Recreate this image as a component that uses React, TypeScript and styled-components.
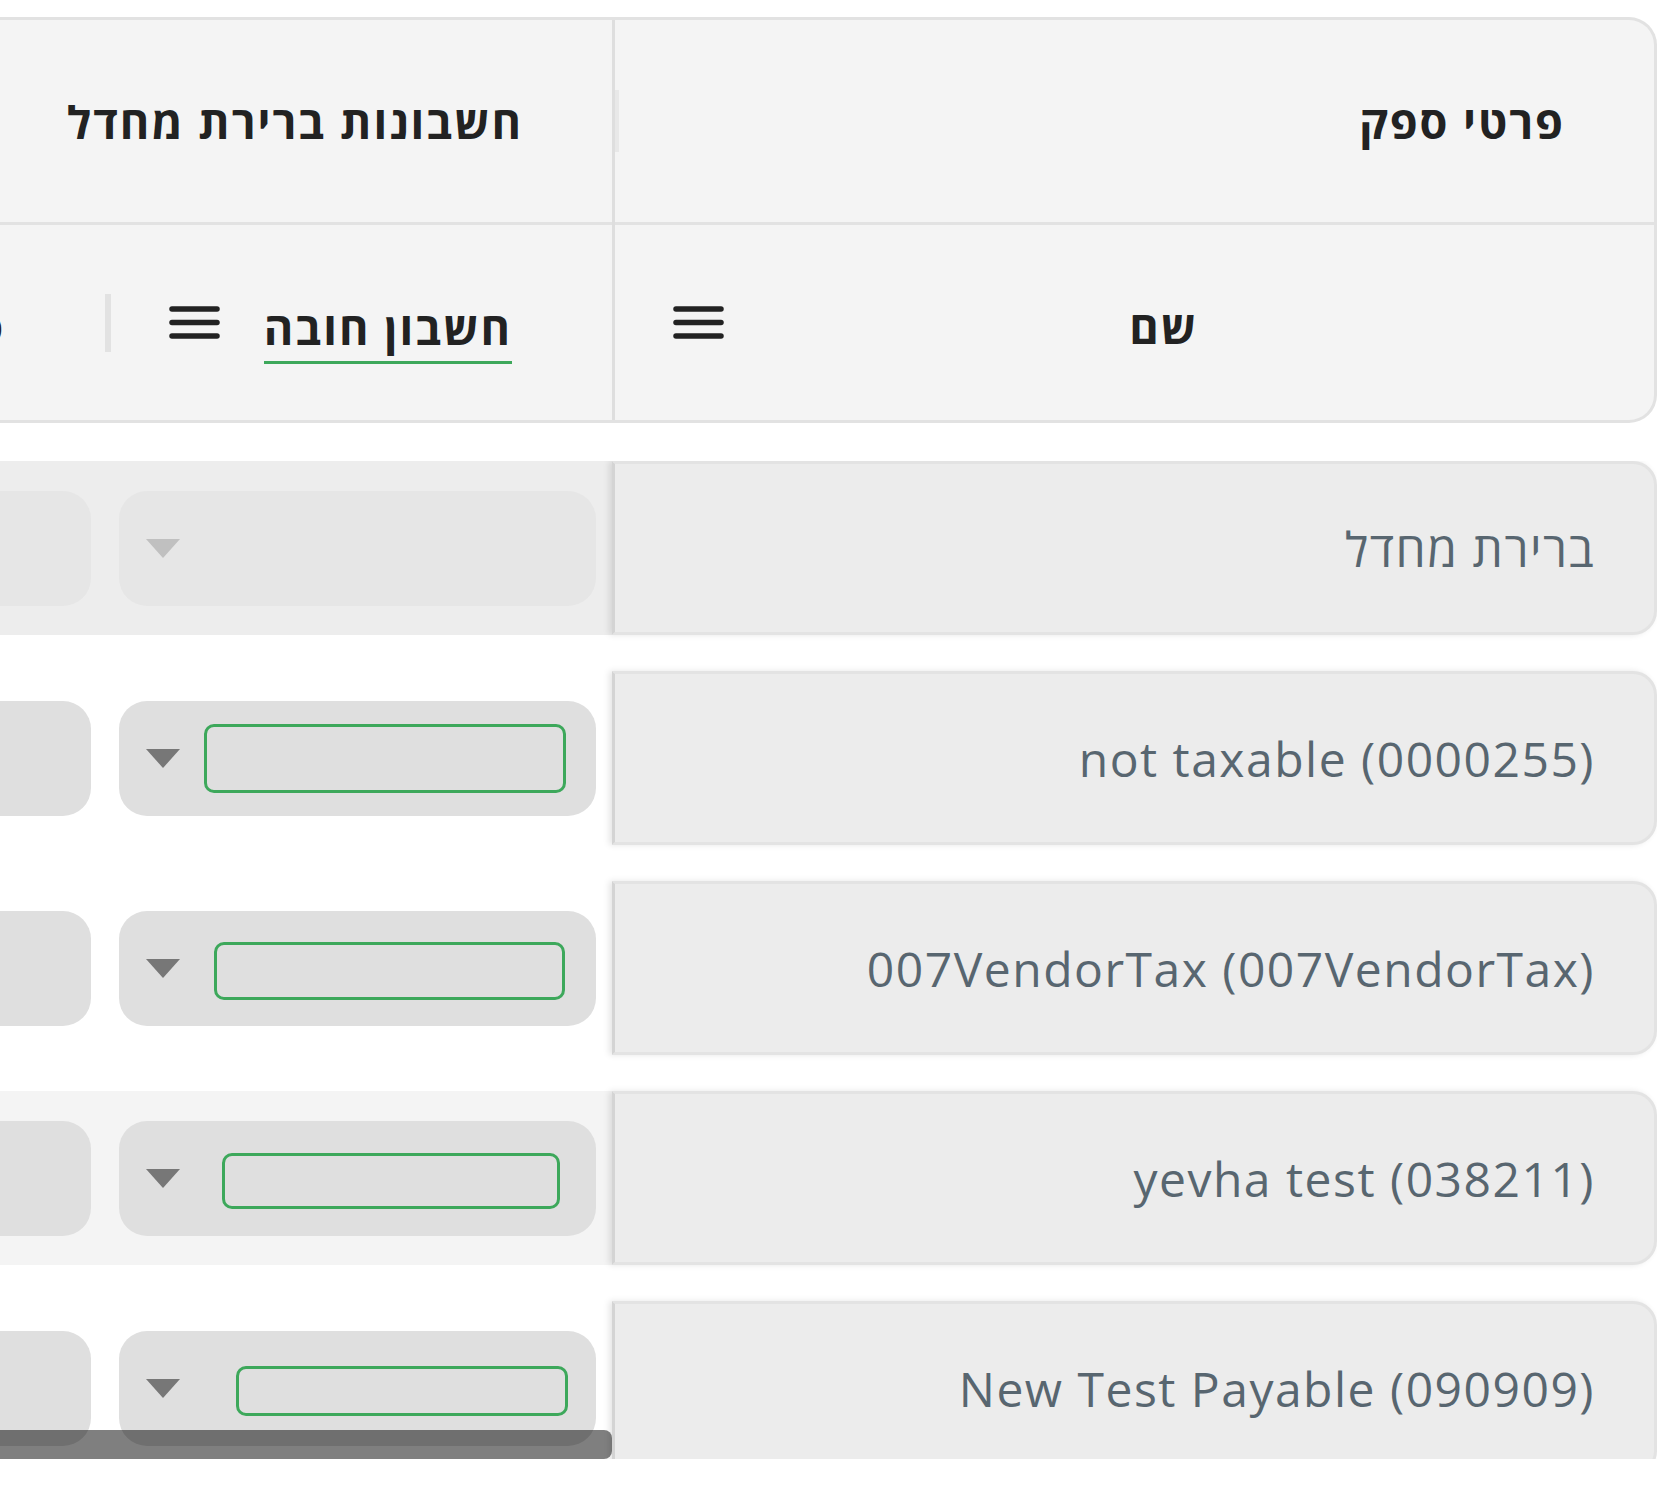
import React from 'react';
import styled, { createGlobalStyle } from 'styled-components';

const GlobalStyle = createGlobalStyle`
  *, *::before, *::after { box-sizing: border-box; }
  html, body { margin: 0; padding: 0; background: #ffffff; }
  body { font-family: "Open Sans", "Liberation Sans", "DejaVu Sans", sans-serif; }
`;

const Page = styled.div`
  direction: rtl;
  width: 1679px;
  padding: 17px 22px 0 0;
`;

const Header = styled.div`
  display: flex;
  height: 406px;
  background: #f4f4f4;
  border: 3px solid #e2e2e2;
  border-left: none;
  border-radius: 0 28px 28px 0;
  overflow: hidden;
`;

const PinnedHeader = styled.div`
  flex: 0 0 1042px;
  display: flex;
  flex-direction: column;
  border-left: 3px solid #dedede;
`;

const ScrollHeader = styled.div`
  flex: 1 1 auto;
  min-width: 0;
  overflow: hidden;
  display: flex;
  flex-direction: column;
`;

const GroupRow = styled.div`
  flex: 0 0 205px;
  display: flex;
  align-items: center;
  border-bottom: 3px solid #e2e2e2;
  padding-right: 89px;
`;

const ColRow = styled.div`
  flex: 1 1 auto;
  display: flex;
  align-items: center;
`;

const HeaderLabel = styled.span<{ $underlined?: boolean }>`
  font-size: 45px;
  font-weight: 700;
  letter-spacing: 2px;
  color: #222222;
  white-space: nowrap;
  line-height: 1.2;
  margin-top: 20px;
  padding-bottom: ${(p) => (p.$underlined ? '6px' : '9px')};
  border-bottom: 3px solid ${(p) => (p.$underlined ? '#3da85b' : 'transparent')};
`;

const GroupLabel = styled.span`
  font-size: 45px;
  font-weight: 700;
  letter-spacing: 2px;
  color: #222222;
  white-space: nowrap;
`;

const HeaderCell = styled.div<{ $width: number; $inset: number }>`
  flex: 0 0 ${(p) => p.$width}px;
  height: 100%;
  display: flex;
  align-items: center;
  padding-right: ${(p) => p.$inset}px;
  padding-left: 58px;
`;

const MenuButton = styled.span`
  margin-right: auto;
  display: flex;
  width: 51px;
  height: 34px;
`;

const ResizeHandle = styled.span<{ $height: number; $light?: boolean }>`
  flex: 0 0 ${(p) => (p.$light ? 4 : 6)}px;
  height: ${(p) => p.$height}px;
  background: ${(p) => (p.$light ? '#e8e8e8' : '#e2e2e2')};
  align-self: center;
`;

const PinnedHandle = styled(ResizeHandle)`
  margin-right: auto;
`;

const Body = styled.div`
  margin-top: 38px;
  height: 998px;
  overflow: hidden;
  position: relative;
  display: flex;
  flex-direction: column;
  gap: 36px;
`;

const Row = styled.div`
  flex: 0 0 174px;
  display: flex;
`;

const PinnedCell = styled.div`
  position: relative;
  z-index: 1;
  flex: 0 0 1045px;
  display: flex;
  align-items: center;
  padding-right: 59px;
  background: #ececec;
  border: 3px solid #e3e3e3;
  border-left-color: #d4d4d4;
  border-radius: 0 24px 24px 0;
  box-shadow: -3px 0 6px rgba(0, 0, 0, 0.1);
`;

const CellText = styled.span`
  font-size: 48px;
  font-weight: 400;
  letter-spacing: 1.5px;
  color: #586670;
  white-space: nowrap;
`;

const ScrollCells = styled.div<{ $bg: string }>`
  flex: 1 1 auto;
  min-width: 0;
  overflow: hidden;
  display: flex;
  align-items: center;
  background: ${(p) => p.$bg};
`;

const BodyCell = styled.div`
  flex: 0 0 505px;
  padding: 0 16px 0 12px;
`;

const Select = styled.div<{ $disabled?: boolean }>`
  height: 115px;
  border-radius: 28px;
  background: ${(p) => (p.$disabled ? '#e6e6e6' : '#dfdfdf')};
  display: flex;
  align-items: center;
  padding-left: 27px;
`;

const EditBox = styled.div<{ $w: number; $h: number; $r: number; $dy: number }>`
  width: ${(p) => p.$w}px;
  height: ${(p) => p.$h}px;
  margin-right: ${(p) => p.$r}px;
  margin-top: ${(p) => p.$dy}px;
  border: 3px solid #3da85b;
  border-radius: 10px;
`;

const Arrow = styled.svg`
  margin-right: auto;
  display: block;
`;

const ScrollThumb = styled.div`
  position: absolute;
  left: 0;
  bottom: 0;
  width: 612px;
  height: 29px;
  background: rgba(0, 0, 0, 0.5);
  border-radius: 0 8px 8px 0;
  z-index: 2;
`;

const MenuIcon = () => (
  <MenuButton>
    <svg width="51" height="34" viewBox="0 0 51 34">
      <g stroke="#222" strokeWidth="5.5" strokeLinecap="round">
        <line x1="3" y1="3" x2="48" y2="3" />
        <line x1="3" y1="16.5" x2="48" y2="16.5" />
        <line x1="3" y1="30" x2="48" y2="30" />
      </g>
    </svg>
  </MenuButton>
);

const DropArrow = ({ disabled }: { disabled?: boolean }) => (
  <Arrow width="34" height="19" viewBox="0 0 34 19">
    <polygon points="0,0 34,0 17,19" fill={disabled ? '#c0c0c0' : '#777777'} />
  </Arrow>
);

type RowData = {
  name: string;
  bg: string;
  disabled?: boolean;
  box?: { w: number; h: number; r: number; dy: number };
};

const rows: RowData[] = [
  { name: 'ברירת מחדל', bg: '#ededed', disabled: true },
  { name: 'not taxable (0000255)', bg: 'transparent', box: { w: 362, h: 69, r: 30, dy: 1 } },
  { name: '007VendorTax (007VendorTax)', bg: 'transparent', box: { w: 351, h: 58, r: 31, dy: 6 } },
  { name: 'yevha test (038211)', bg: '#f4f4f4', box: { w: 338, h: 56, r: 36, dy: 6 } },
  { name: 'New Test Payable (090909)', bg: 'transparent', box: { w: 332, h: 50, r: 28, dy: 6 } },
];

export default function App() {
  return (
    <>
      <GlobalStyle />
      <Page>
        <Header>
          <PinnedHeader>
            <GroupRow>
              <GroupLabel>פרטי ספק</GroupLabel>
              <PinnedHandle $height={62} $light />
            </GroupRow>
            <ColRow>
              <HeaderCell $width={1039} $inset={456}>
                <HeaderLabel>שם</HeaderLabel>
                <MenuIcon />
              </HeaderCell>
            </ColRow>
          </PinnedHeader>
          <ScrollHeader>
            <GroupRow>
              <GroupLabel>חשבונות ברירת מחדל</GroupLabel>
            </GroupRow>
            <ColRow>
              <HeaderCell $width={501} $inset={100}>
                <HeaderLabel $underlined>חשבון חובה</HeaderLabel>
                <MenuIcon />
              </HeaderCell>
              <ResizeHandle $height={58} />
              <HeaderCell $width={501} $inset={100}>
                <HeaderLabel>סוג מס</HeaderLabel>
                <MenuIcon />
              </HeaderCell>
            </ColRow>
          </ScrollHeader>
        </Header>
        <Body>
          {rows.map((r) => (
            <Row key={r.name}>
              <PinnedCell>
                <CellText dir="auto">{r.name}</CellText>
              </PinnedCell>
              <ScrollCells $bg={r.bg}>
                <BodyCell>
                  <Select $disabled={r.disabled}>
                    {r.box && <EditBox $w={r.box.w} $h={r.box.h} $r={r.box.r} $dy={r.box.dy} />}
                    <DropArrow disabled={r.disabled} />
                  </Select>
                </BodyCell>
                <BodyCell>
                  <Select $disabled={r.disabled}>
                    <DropArrow disabled={r.disabled} />
                  </Select>
                </BodyCell>
              </ScrollCells>
            </Row>
          ))}
          <ScrollThumb />
        </Body>
      </Page>
    </>
  );
}
